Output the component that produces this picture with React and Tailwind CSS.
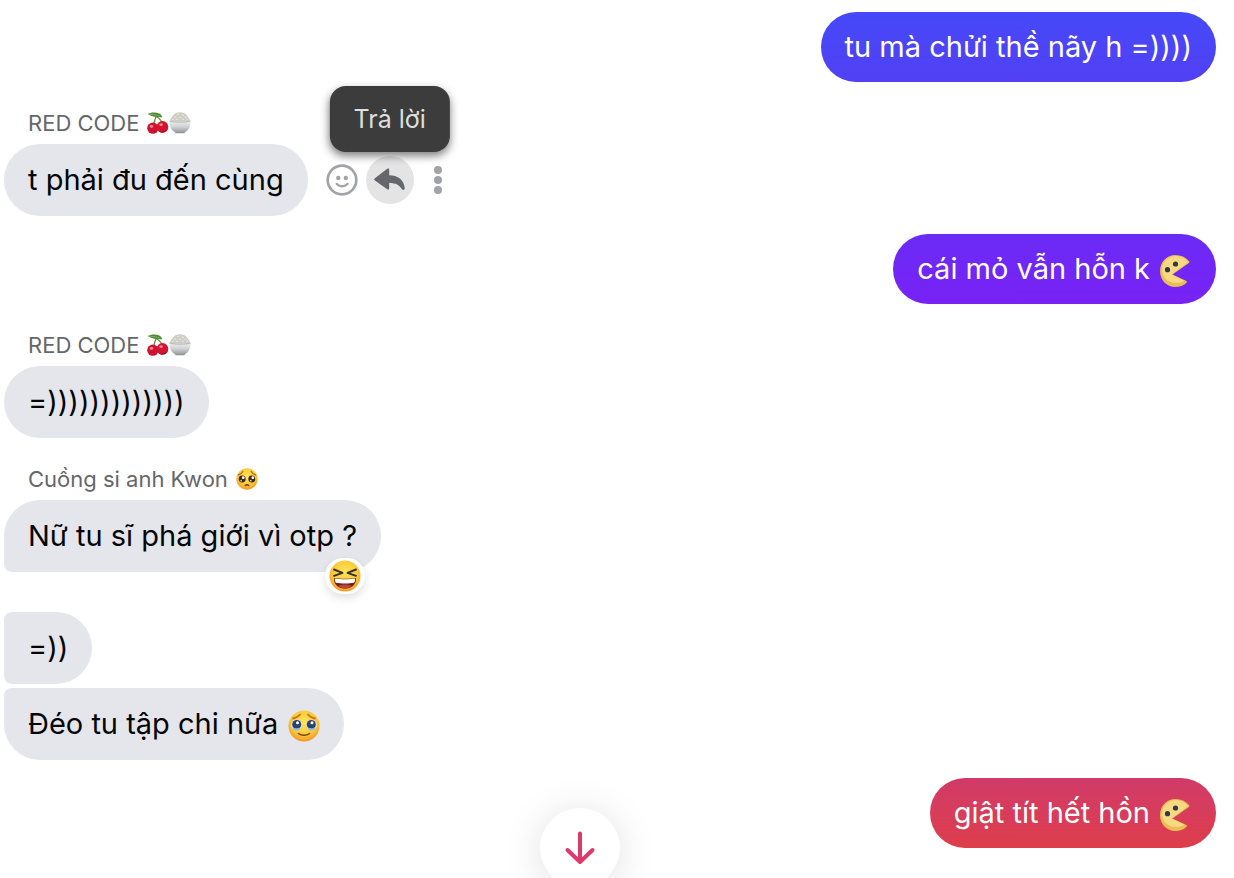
import React from "react";
import clsx from "clsx";

const messages = [
  {
    id: 1,
    own: true,
    text: "tu mà chửi thề nãy h =))))",
    gradient: "from-[#4549f8] to-[#5140f4]",
  },
  {
    id: 2,
    sender: "RED CODE",
    senderEmoji: ["cherries", "rice"],
    text: "t phải đu đến cùng",
    showActions: true,
  },
  {
    id: 3,
    own: true,
    text: "cái mỏ vẫn hỗn k",
    emoji: "pacman",
    gradient: "from-[#6a2bf5] to-[#7822f5]",
  },
  {
    id: 4,
    sender: "RED CODE",
    senderEmoji: ["cherries", "rice"],
    text: "=)))))))))))))",
  },
  {
    id: 5,
    sender: "Cuồng si anh Kwon",
    senderEmoji: ["pleading"],
    text: "Nữ tu sĩ phá giới vì otp ?",
    shape: "first",
    reaction: "laughing",
  },
  { id: 6, text: "=))", shape: "middle", afterReaction: true },
  { id: 7, text: "Đéo tu tập chi nữa", emoji: "tears", shape: "last" },
  {
    id: 8,
    own: true,
    text: "giật tít hết hồn",
    emoji: "pacman",
    gradient: "from-[#d03a69] to-[#de3e4a]",
  },
];

const FaceGradient = ({ id }) => (
  <defs>
    <radialGradient id={id} cx="50%" cy="38%" r="62%">
      <stop offset="0" stopColor="#ffe45c" />
      <stop offset="0.65" stopColor="#fdc937" />
      <stop offset="1" stopColor="#f2982a" />
    </radialGradient>
  </defs>
);

const Cherries = ({ className }) => (
  <svg viewBox="0 0 32 32" className={className} role="img" aria-label="cherries">
    <path d="M13 7C11 13 10 16 9 20M14 7c5 3 8 7 9 12" fill="none" stroke="#6c8f35" strokeWidth="1.8" />
    <path d="M1 3C5 0 13 0 18 2c3 1.500 4 4 4 5.500C14 8 7 7 1 3z" fill="#4c8a36" />
    <path d="M3 3c5 .5 11 1 16 3" stroke="#95bd66" strokeWidth="1" fill="none" />
    <circle cx="8.500" cy="23.500" r="8.200" fill="#cf1230" />
    <circle cx="22.500" cy="21.500" r="8.500" fill="#d5142f" />
    <path d="M15.500 26.500c1.500 2.500 4 3.500 7 3.500 4 0 7-2 8.200-6-3.200 4-9.700 6-15.200 2.500z" fill="#a30b22" />
    <ellipse cx="6.500" cy="21" rx="2.600" ry="2" fill="#f0899a" />
    <ellipse cx="20.500" cy="18.500" rx="2.600" ry="2" fill="#f0899a" />
  </svg>
);

const Rice = ({ className }) => (
  <svg viewBox="0 0 32 32" className={className} role="img" aria-label="bowl of rice">
    <defs>
      <linearGradient id="bowl" x1="0" y1="0" x2="0" y2="1">
        <stop offset="0" stopColor="#eef0f0" />
        <stop offset="0.5" stopColor="#cfd2d3" />
        <stop offset="1" stopColor="#94999c" />
      </linearGradient>
    </defs>
    <path d="M10 28h12l1 3H9z" fill="#85898c" />
    <path d="M1 14C4 5 9 .5 16 .5S28 5 31 14z" fill="#cfccc5" />
    <path
      d="M5 11l2-1M8 7l2 1M12 4l2-1M15 7l2 1M19 4l2 1M23 8l2-1M26 11l1-1M11 11l2-1M19 10l2 1"
      stroke="#e8e6e1"
      strokeWidth="1.6"
      strokeLinecap="round"
    />
    <path d="M.5 13c4 2 27 2 31 0 0 8-4 16-10.500 17H11C4.500 29 .5 21 .5 13z" fill="url(#bowl)" />
    <path d="M.5 13c4 2.500 27 2.500 31 0" stroke="#a3a6a7" fill="none" />
  </svg>
);

const Pleading = ({ className }) => (
  <svg viewBox="0 0 32 32" className={className} role="img" aria-label="pleading face">
    <FaceGradient id="pleading-face" />
    <circle cx="16" cy="16" r="15.500" fill="url(#pleading-face)" />
    <path d="M3.500 10c3-1 5-2.500 6.500-5M28.500 10c-3-1-5-2.500-6.500-5" stroke="#a35f16" strokeWidth="1.600" fill="none" strokeLinecap="round" />
    <circle cx="9" cy="16" r="5" fill="#3b2716" />
    <circle cx="23" cy="16" r="5" fill="#3b2716" />
    <circle cx="10.500" cy="14" r="2" fill="#fff" />
    <circle cx="24.500" cy="14" r="2" fill="#fff" />
    <circle cx="7.500" cy="18.500" r="1.300" fill="#d9c9bd" />
    <circle cx="21.500" cy="18.500" r="1.300" fill="#d9c9bd" />
    <path d="M13.500 25.500c1.500-1.500 3.500-1.500 5 0" stroke="#6b3a10" strokeWidth="2" fill="none" strokeLinecap="round" />
  </svg>
);

const Tears = ({ className }) => (
  <svg viewBox="0 0 32 32" className={className} role="img" aria-label="face holding back tears">
    <FaceGradient id="tears-face" />
    <circle cx="16" cy="16" r="15.500" fill="url(#tears-face)" />
    <path d="M5 8.500c3-.5 5.500-2 7-4M27 8.500c-3-.5-5.500-2-7-4" stroke="#c9751c" strokeWidth="1.800" fill="none" strokeLinecap="round" />
    <circle cx="8.500" cy="15" r="5.400" fill="#d5e5ef" />
    <circle cx="23.500" cy="15" r="5.400" fill="#d5e5ef" />
    <circle cx="8.700" cy="14.500" r="4.500" fill="#29436a" />
    <circle cx="23.300" cy="14.500" r="4.500" fill="#29436a" />
    <path d="M4.500 17.500c3 1 5.500 1 8 0-.5 2-2 3-4 3s-3.500-1-4-3zM19.500 17.500c2.500 1 5 1 8 0-.5 2-2 3-4 3s-3.500-1-4-3z" fill="#86b9e2" />
    <circle cx="9.500" cy="12.800" r="1.500" fill="#fff" />
    <circle cx="24" cy="12.800" r="1.500" fill="#fff" />
    <path d="M10.500 23.500c3 2.400 8 2.400 11 0" stroke="#74400f" strokeWidth="1.600" fill="none" strokeLinecap="round" />
  </svg>
);

const Laughing = ({ className }) => (
  <svg viewBox="0 0 32 32" className={className} role="img" aria-label="laughing face">
    <FaceGradient id="laughing-face" />
    <circle cx="16" cy="16" r="15.500" fill="url(#laughing-face)" />
    <path
      d="M5 9.500l8.500 3.300L5 15.800M27 9.500l-8.500 3.300 8.500 3"
      stroke="#33302f"
      strokeWidth="1.900"
      fill="none"
      strokeLinecap="round"
      strokeLinejoin="round"
    />
    <path d="M5 18c6 1 16 1 22 0 .5 6-4 10.500-11 10.500S4.500 24 5 18z" fill="#6d1f19" />
    <path d="M9.500 26c2-2 11-2 13 0-1.800 1.700-4 2.500-6.500 2.500s-4.700-.8-6.500-2.500z" fill="#b54538" />
    <path d="M5.800 18.600c6 .9 14.400.9 20.400 0 0 1.700-.3 3.200-1 4.200-5 1-13.400 1-18.400 0-.7-1-1-2.500-1-4.200z" fill="#fff" />
  </svg>
);

const Pacman = ({ className }) => (
  <svg viewBox="0 0 32 32" className={className} role="img" aria-label="pacman">
    <path
      d="M15.500 0C6.500 0 0 7 0 16s6.500 16 15.500 16c4 0 8-1.300 11-4.300.7-.8.400-1.500-.6-1.900L12.500 19.500 28.500 8.300c1-.700 1.100-1.500.5-2.200C25.500 2 21 0 15.500 0z"
      fill="#e9bf52"
    />
    <path
      d="M16.500 1C8.500 1 2 6.500 2 14.500 2 22.500 8 28 16 28c3.500 0 6-.600 8.500-2.200L11.500 19.500 28 7.300C25 3 21 1 16.500 1z"
      fill="#f7d883"
    />
    <circle cx="15.500" cy="9" r="2.600" fill="#2d3a45" />
    <circle cx="7.500" cy="14.700" r="2.600" fill="#2d3a45" />
  </svg>
);

const emojis = {
  cherries: Cherries,
  rice: Rice,
  pleading: Pleading,
  tears: Tears,
  laughing: Laughing,
  pacman: Pacman,
};

const Emoji = ({ name, className }) => {
  const Icon = emojis[name];
  return <Icon className={className} />;
};

const MessageActions = () => (
  <div className="ml-2.5 flex items-center">
    <button type="button" aria-label="Bày tỏ cảm xúc" className="flex size-12 items-center justify-center">
      <svg viewBox="0 0 32 32" className="size-8" fill="#a1a3a6">
        <circle cx="16" cy="16" r="14.300" fill="none" stroke="#a1a3a6" strokeWidth="2.700" />
        <circle cx="12.300" cy="14" r="2.200" />
        <circle cx="19.800" cy="14" r="2.200" />
        <path d="M10.800 20c2.800 3 7.800 3 10.600 0" fill="none" stroke="#a1a3a6" strokeWidth="2.500" strokeLinecap="round" />
      </svg>
    </button>
    <div className="relative">
      <button
        type="button"
        aria-describedby="reply-tip"
        aria-label="Trả lời"
        className="flex size-12 items-center justify-center rounded-full bg-[#e4e4e4]"
      >
        <svg viewBox="0 0 32 24" className="h-6 w-8" fill="#65676b">
          <path d="M13.200.8c1-.8 2-.3 2 1v5.400c8.500 0 15 4.600 15.500 13 .1 2-2 2.400-2.900.9-2.300-4-6-6.100-12.600-6.100v5.200c0 1.300-1 1.800-2 1L.9 12.600c-1-.8-1-1.600 0-2.300z" />
        </svg>
      </button>
      <div
        id="reply-tip"
        role="tooltip"
        className="absolute bottom-13 left-1/2 z-10 -translate-x-1/2 rounded-2xl bg-[#3c3c3c] px-6 py-4 text-[25px] leading-[34px] whitespace-nowrap text-[#dedede] shadow-[0_4px_8px_rgba(0,0,0,0.5)]"
      >
        Trả lời
      </div>
    </div>
    <button type="button" aria-label="Xem thêm" className="flex size-12 items-center justify-center">
      <svg viewBox="0 0 8 28" className="h-7 w-2" fill="#a1a3a6">
        <circle cx="4" cy="4" r="4" />
        <circle cx="4" cy="14" r="4" />
        <circle cx="4" cy="24" r="4" />
      </svg>
    </button>
  </div>
);

const OwnMessage = ({ message }) => (
  <div className="mt-[18px] flex justify-end first:mt-3">
    <div
      className={clsx(
        "flex items-center gap-2.5 rounded-full bg-linear-to-b px-6 py-[15px] text-[29px] leading-10 text-white",
        message.gradient
      )}
    >
      {message.text}
      {message.emoji && <Emoji name={message.emoji} className="mt-1 size-8" />}
    </div>
  </div>
);

const OtherMessage = ({ message }) => (
  <div className={clsx(!message.sender && (message.afterReaction ? "mt-10" : "mt-1"))}>
    {message.sender && (
      <div className="mt-[26px] mb-1.5 flex items-center pl-6 text-[22px] leading-[30px] text-[#65676b]">
        <span className="mr-2">{message.sender}</span>
        {message.senderEmoji.map((name) => (
          <Emoji key={name} name={name} className="size-[22px]" />
        ))}
      </div>
    )}
    <div className="flex items-center">
      <div
        className={clsx(
          "relative flex items-center gap-2.5 bg-[#e4e6eb] px-6 py-4 text-[29px] leading-10 text-[#050505]",
          !message.shape && "rounded-[36px]",
          message.shape === "first" && "rounded-[36px] rounded-bl-lg",
          message.shape === "middle" && "rounded-r-[36px] rounded-l-lg",
          message.shape === "last" && "rounded-[36px] rounded-tl-lg"
        )}
      >
        {message.text}
        {message.emoji && <Emoji name={message.emoji} className="mt-1 size-8" />}
        {message.reaction && (
          <button
            type="button"
            aria-label="Cảm xúc"
            className="absolute right-4 -bottom-[22px] rounded-full bg-white px-1 py-0.5 shadow-[0_4px_8px_rgba(0,0,0,0.12)]"
          >
            <Emoji name={message.reaction} className="size-8" />
          </button>
        )}
      </div>
      {message.showActions && <MessageActions />}
    </div>
  </div>
);

const App = () => {
  return (
    <main className="relative h-screen overflow-hidden bg-white font-['Inter',sans-serif]">
      <div className="flex flex-col pr-[18px] pl-1">
        {messages.map((message) =>
          message.own ? (
            <OwnMessage key={message.id} message={message} />
          ) : (
            <OtherMessage key={message.id} message={message} />
          )
        )}
      </div>
      <button
        type="button"
        aria-label="Cuộn xuống"
        className="absolute -bottom-2.5 left-[47%] flex size-20 -translate-x-1/2 items-center justify-center rounded-full bg-white shadow-[0_4px_40px_rgba(0,0,0,0.12)]"
      >
        <svg
          viewBox="0 0 32 34"
          className="h-[34px] w-8"
          fill="none"
          stroke="#dd3a6b"
          strokeWidth="4"
          strokeLinecap="round"
          strokeLinejoin="round"
        >
          <path d="M16 2.500v28M3.500 19L16 31l12.500-12" />
        </svg>
      </button>
    </main>
  );
};

export default App;
